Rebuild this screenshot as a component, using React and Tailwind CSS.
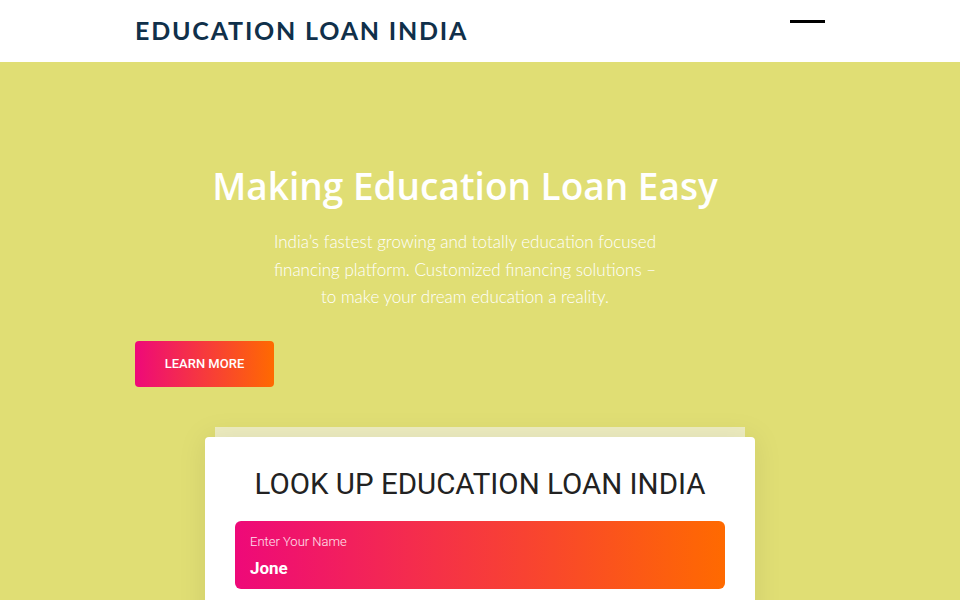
import React from 'react';

const App = () => {
  return (
    <div className="min-h-screen bg-[#e0de74] overflow-hidden" style={{ fontFamily: '"Open Sans", sans-serif' }}>
      {/* header */}
      <header className="bg-white h-[62px]">
        <div className="w-[690px] mx-auto h-full flex items-center justify-between">
          <a
            className="text-[25px] font-bold tracking-[1.8px] text-[#10304a] leading-none pb-[1px]"
            style={{ fontFamily: 'Lato, sans-serif' }}
          >
            EDUCATION LOAN INDIA
          </a>
          <button className="w-[35px] h-[3px] bg-black mb-[20px]" aria-label="menu"></button>
        </div>
      </header>

      {/* hero */}
      <section className="w-[690px] mx-auto pt-[102px]">
        <div className="pr-[30px] text-center text-white">
          <h1 className="text-[37px] font-semibold leading-[44px]" style={{ fontFamily: '"Open Sans", sans-serif' }}>
            Making Education Loan Easy
          </h1>
          <p
            className="mt-[20px] text-[17px] font-light leading-[27.5px] w-[400px] mx-auto text-white"
            style={{ fontFamily: 'Lato, sans-serif' }}
          >
            India’s fastest growing and totally education focused financing platform. Customized financing solutions – to make your dream education a reality.
          </p>
        </div>

        <button
          className="mt-[30px] w-[139px] h-[46px] rounded bg-linear-to-r/srgb from-[#ee0979] to-[#ff6a00] text-white text-[13px] font-medium"
          style={{ fontFamily: 'Roboto, sans-serif' }}
        >
          LEARN MORE
        </button>
      </section>

      {/* lookup card */}
      <section className="w-[550px] mx-auto mt-[40px]">
        <div className="mx-[10px] h-[10px] bg-[#eeedc0]"></div>
        <div className="bg-white rounded shadow-[0_0_30px_rgba(0,0,0,0.08)] px-[30px] pt-[28px] pb-[40px]">
          <h2
            className="text-center text-[29.5px] text-[#222] leading-[38px]"
            style={{ fontFamily: 'Roboto, sans-serif' }}
          >
            LOOK UP EDUCATION LOAN INDIA
          </h2>
          <div
            className="mt-[18px] h-[68px] rounded-md bg-linear-to-r/srgb from-[#ee0979] to-[#ff6a00] px-[15px] pt-[13px]"
            style={{ fontFamily: 'Roboto, sans-serif' }}
          >
            <label className="block text-[13px] font-light text-white/90 leading-[16px]">Enter Your Name</label>
            <div className="mt-[8px] text-[17px] font-bold text-white leading-[20px]">Jone</div>
          </div>
        </div>
      </section>
    </div>
  );
};

export default App;
